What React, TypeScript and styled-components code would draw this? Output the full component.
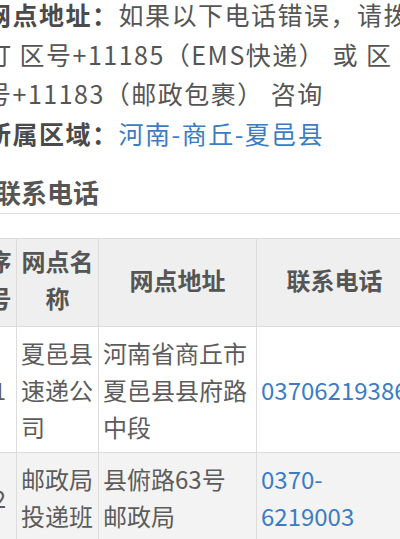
import styled, { createGlobalStyle } from "styled-components";

const GlobalStyle = createGlobalStyle`
  html, body {
    margin: 0;
    padding: 0;
    background: #ffffff;
  }
  body {
    font-family: "Noto Sans CJK SC", "Noto Sans", sans-serif;
    overflow: hidden;
  }
`;

const colors = {
  text: "#555555",
  strong: "#4a4a4a",
  cell: "#5c5c5c",
  link: "#3b7cc4",
  border: "#dcdcdc",
  headBg: "#efefef",
  stripe: "#f3f3f3",
};

const Page = styled.div`
  width: 400px;
  height: 539px;
  overflow: hidden;
`;

// the screenshot is a crop, so the article starts a bit left of the frame
const Article = styled.article`
  width: 440px;
  margin: -5px 0 0 -18px;
`;

const Info = styled.div`
  width: 428px;
  padding-left: 4px;
`;

const InfoLine = styled.p`
  margin: 0;
  font-size: 25px;
  line-height: 39.5px;
  letter-spacing: 1.5px;
  color: ${colors.text};
`;

const Label = styled.b`
  font-weight: 700;
  color: ${colors.strong};
`;

const Link = styled.a`
  color: ${colors.link};
  text-decoration: none;
`;

const Heading = styled.h2`
  margin: 21px 0 0;
  padding: 0 0 3px 13px;
  font-size: 26px;
  font-weight: 700;
  line-height: 36px;
  color: ${colors.text};
  border-bottom: 1px solid ${colors.border};
`;

const Table = styled.table`
  width: 430px;
  margin-top: 24px;
  border-collapse: collapse;
  table-layout: fixed;
  font-size: 24px;
  line-height: 37px;
`;

const Head = styled.th<{ $width: number }>`
  box-sizing: border-box;
  width: ${({ $width }) => $width}px;
  padding: 3px 4px 10px;
  background: ${colors.headBg};
  border: 1px solid ${colors.border};
  font-weight: 700;
  color: ${colors.text};
  text-align: center;
  vertical-align: middle;
`;

const Row = styled.tr<{ $striped: boolean }>`
  background: ${({ $striped }) => ($striped ? colors.stripe : "#ffffff")};
`;

const Cell = styled.td<{ $center?: boolean }>`
  box-sizing: border-box;
  padding: 7px 4px;
  border: 1px solid ${colors.border};
  color: ${colors.cell};
  text-align: ${({ $center }) => ($center ? "center" : "left")};
  vertical-align: middle;
`;

const Phone = styled.a`
  color: ${colors.link};
  text-decoration: none;
`;

const outlets = [
  {
    no: "1",
    name: "夏邑县速递公司",
    address: ["河南省商丘市夏邑县县府路中段"],
    phone: "03706219386",
  },
  {
    no: "2",
    name: "邮政局投递班",
    address: ["县俯路63号", "邮政局"],
    phone: "0370-6219003",
  },
];

export default function App() {
  return (
    <Page>
      <GlobalStyle />
      <Article>
        <Info>
          <InfoLine>
            <Label>网点地址：</Label>
            如果以下电话错误，请拨打 区号+11185（EMS快递） 或 区号+11183（邮政包裹） 咨询
          </InfoLine>
          <InfoLine>
            <Label>所属区域：</Label>
            <Link href="#">河南-商丘-夏邑县</Link>
          </InfoLine>
        </Info>

        <Heading>联系电话</Heading>

        <Table>
          <thead>
            <tr>
              <Head $width={34}>序号</Head>
              <Head $width={82}>网点名称</Head>
              <Head $width={158}>网点地址</Head>
              <Head $width={156}>联系电话</Head>
            </tr>
          </thead>
          <tbody>
            {outlets.map((o, i) => (
              <Row key={o.no} $striped={i % 2 === 1}>
                <Cell $center>{o.no}</Cell>
                <Cell>{o.name}</Cell>
                <Cell>
                  {o.address.map((part, j) => (
                    <span key={part}>
                      {j > 0 && <br />}
                      {part}
                    </span>
                  ))}
                </Cell>
                <Cell>
                  <Phone href="#">{o.phone}</Phone>
                </Cell>
              </Row>
            ))}
          </tbody>
        </Table>
      </Article>
    </Page>
  );
}
